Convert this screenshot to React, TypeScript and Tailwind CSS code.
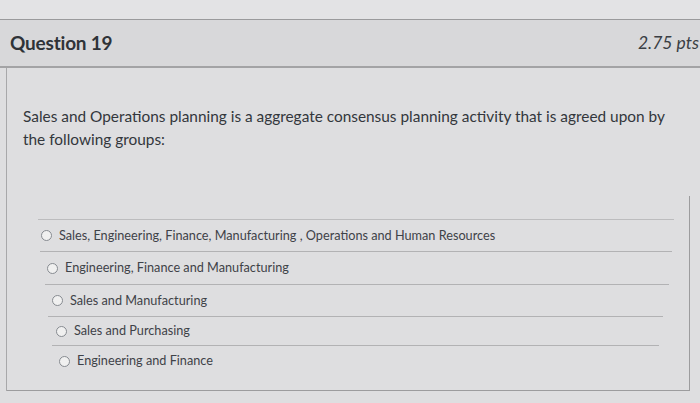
import React from 'react'

const answers = [
  'Sales, Engineering, Finance, Manufacturing , Operations and Human Resources',
  'Engineering, Finance and Manufacturing',
  'Sales and Manufacturing',
  'Sales and Purchasing',
  'Engineering and Finance',
]

// the photo is taken at an angle, so each row sits a little further right
const rowPad = ['pl-[34px]', 'pl-[40px]', 'pl-[45px]', 'pl-[49px]', 'pl-[52px]']
const rowLine = ['ml-[33px] mr-[17px]', 'ml-[38px] mr-[20px]', 'ml-[41px] mr-[26px]', 'ml-[45px] mr-[30px]', '']
const rowH = ['h-[32px]', 'h-[33px]', 'h-[32px]', 'h-[29px]', 'h-[30px]']

export default function App() {
  return (
    <div
      className="w-[700px] h-[403px] overflow-hidden bg-[#dedee0] text-[#2d3b45]"
      style={{ fontFamily: 'Lato, "Open Sans", sans-serif' }}
    >
      {/* top strip */}
      <div className="h-[20px] bg-[#e3e3e5] border-b border-[#9a9a9c]" />

      {/* header */}
      <div className="h-[48px] flex items-center justify-between bg-[#d8d8da] border-b-2 border-[#a3a3a5] pl-[10px] pr-[1px]">
        <h2 className="text-[19px] font-bold text-[#2f3338] tracking-[-0.2px]">Question 19</h2>
        <span className="text-[17.5px] text-[#3a3e44] italic whitespace-nowrap">2.75 pts</span>
      </div>

      {/* card */}
      <div className="ml-[6px] border-l border-[#a8a8aa]">
        <div className="pt-[37px] pl-[16px] w-[660px] text-[15.4px] leading-[23px] text-[#33373c]">
          Sales and Operations planning is a aggregate consensus planning activity that is agreed upon by
          the following groups:
        </div>

        <div className="mt-[45px] mr-[10px] h-[195px] border-r border-b border-[#9c9c9e] pt-[23px]">
          <div className="ml-[31px] mr-[15px] border-t border-[#bcbcbe]" />
          {answers.map((a, i) => (
            <div key={a} className={`flex flex-col ${rowH[i]}`}>
              <div className={`flex flex-1 items-center gap-[7px] ${rowPad[i]}`}>
                <span className="w-[11px] h-[11px] rounded-full border border-[#878b91] bg-[#f0f0f0] shrink-0" />
                <span className="text-[12.7px] text-[#3e4248] whitespace-nowrap">{a}</span>
              </div>
              {rowLine[i] && <div className={`border-b border-[#b2b2b4] ${rowLine[i]}`} />}
            </div>
          ))}
        </div>
      </div>
    </div>
  )
}
